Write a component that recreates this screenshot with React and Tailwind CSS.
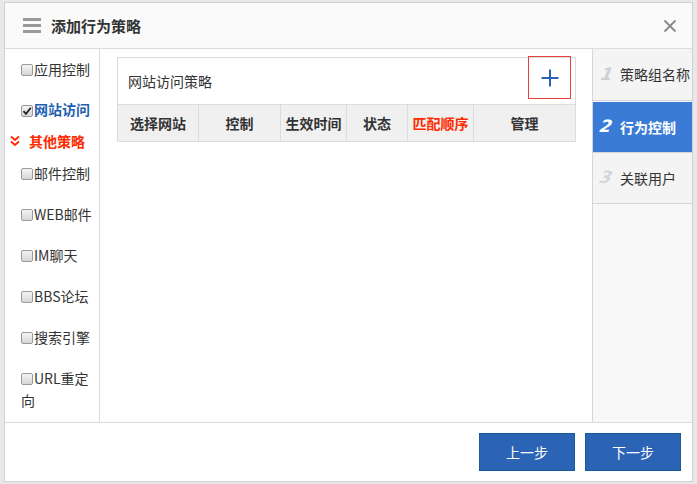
import React from "react";

const FONT = { fontFamily: '"Noto Sans CJK SC", "Noto Sans", sans-serif' };
const NUM = { fontFamily: '"DejaVu Sans", sans-serif' };

function Box({ checked }) {
  return (
    <span className="inline-flex w-[12px] h-[12px] rounded-[2px] border border-[#9a9a9a] bg-gradient-to-b from-[#f4f4f4] to-[#d6d6d6] items-center justify-center align-[-1px] mr-[1px] shrink-0">
      {checked && (
        <svg width="10" height="10" viewBox="0 0 10 10">
          <path d="M1.5 5.2 L4 7.8 L8.8 1.8" fill="none" stroke="#222" strokeWidth="1.8" />
        </svg>
      )}
    </span>
  );
}

function Item({ label, mt, checked, active }) {
  return (
    <div className={`${mt} leading-[22px] text-[14px] pr-[4px] ${active ? "text-[#1f5fb0] font-bold" : "text-[#333]"}`}>
      <Box checked={checked} />
      {label}
    </div>
  );
}

export default function App() {
  const cols = [
    { t: "选择网站", w: "w-[81px]" },
    { t: "控制", w: "w-[82px]" },
    { t: "生效时间", w: "w-[66px]" },
    { t: "状态", w: "w-[61px]" },
    { t: "匹配顺序", w: "w-[66px]", red: true },
    { t: "管理", w: "w-[101px]", last: true },
  ];
  return (
    <div className="w-[697px] h-[484px] bg-[#e8e8e8] pt-[2px] pl-[4px] overflow-hidden" style={FONT}>
      <div className="w-[689px] h-[480px] border border-[#d2d2d2] bg-white flex flex-col">
        {/* header */}
        <div className="h-[46px] border-b border-[#dcdcdc] bg-[#fafafa] flex items-center pl-[18px] pr-[14px] shrink-0">
          <div className="flex flex-col gap-[3px] w-[18px]">
            <span className="h-[3px] bg-[#999]" />
            <span className="h-[3px] bg-[#999]" />
            <span className="h-[3px] bg-[#999]" />
          </div>
          <div className="ml-[10px] text-[15px] font-bold text-[#333] leading-none">添加行为策略</div>
          <div className="ml-auto mr-[1px]">
            <svg width="14" height="14" viewBox="0 0 14 14">
              <path d="M1.5 1.5 L12.5 12.5 M12.5 1.5 L1.5 12.5" stroke="#888" strokeWidth="1.8" />
            </svg>
          </div>
        </div>
        {/* body */}
        <div className="flex h-[373px] shrink-0">
          <div className="w-[95px] border-r border-[#dcdcdc] pl-[16px] pt-[9px] shrink-0">
            <Item label="应用控制" mt="mt-0" />
            <Item label="网站访问" mt="mt-[18px]" checked active />
            <div className="mt-[10px] -ml-[11px] leading-[22px] text-[14px] font-bold text-[#ff2a00] flex items-center">
              <svg width="10" height="12" viewBox="0 0 10 12" className="mr-[9px]">
                <path d="M1 1.5 L5 5 L9 1.5 M1 6.5 L5 10 L9 6.5" fill="none" stroke="#ff2a00" strokeWidth="2" />
              </svg>
              其他策略
            </div>
            <Item label="邮件控制" mt="mt-[10px]" />
            <Item label="WEB邮件" mt="mt-[19px]" />
            <Item label="IM聊天" mt="mt-[19px]" />
            <Item label="BBS论坛" mt="mt-[19px]" />
            <Item label="搜索引擎" mt="mt-[19px]" />
            <Item label="URL重定向" mt="mt-[19px]" />
          </div>
          <div className="w-[492px] pl-[17px] pt-[8px] shrink-0">
            <div className="w-[459px] border border-[#dcdcdc] relative">
              <div className="h-[47px] border-b border-[#dcdcdc] flex items-center pl-[10px] text-[14px] text-[#333]">
                网站访问策略
              </div>
              <div className="absolute right-[4px] top-[-2px] w-[43px] h-[43px] border border-[#e8403a] flex items-center justify-center">
                <svg width="18" height="18" viewBox="0 0 18 18">
                  <path d="M9 0.5 V17.5 M0.5 9 H17.5" stroke="#2a62b5" strokeWidth="2" />
                </svg>
              </div>
              <div className="flex h-[36px] bg-[#f0f0f0]">
                {cols.map((c) => (
                  <div
                    key={c.t}
                    className={`${c.w} ${c.last ? "" : "border-r border-[#dcdcdc]"} flex items-center justify-center text-[14px] font-bold ${c.red ? "text-[#ff2a00]" : "text-[#333]"}`}
                  >
                    {c.t}
                  </div>
                ))}
              </div>
            </div>
          </div>
          <div className="w-[100px] border-l border-[#d6d6d6] bg-[#f8f8f8] shrink-0">
            <div className="h-[52px] border-b border-[#d6d6d6] bg-[#f4f4f4] flex items-center pl-[8px]">
              <span className="w-[19px] text-[17px] font-bold italic text-[#d0d0d0] -skew-x-12 inline-block" style={NUM}>1</span>
              <span className="text-[14px] text-[#333]">策略组名称</span>
            </div>
            <div className="h-[50px] mt-[1px] bg-[#3a7bd5] flex items-center pl-[7px]">
              <span className="w-[20px] text-[17px] font-bold italic text-white -skew-x-12 inline-block" style={NUM}>2</span>
              <span className="text-[14px] font-bold text-white">行为控制</span>
            </div>
            <div className="h-[52px] border-y border-[#d6d6d6] bg-[#f4f4f4] flex items-center pl-[7px]">
              <span className="w-[20px] text-[17px] font-bold italic text-[#d6d6d6] -skew-x-12 inline-block" style={NUM}>3</span>
              <span className="text-[14px] text-[#333]">关联用户</span>
            </div>
          </div>
        </div>
        {/* footer */}
        <div className="flex-1 border-t border-[#dcdcdc] flex items-start justify-end pt-[10px] pr-[11px] gap-[10px]">
          <button className="w-[96px] h-[38px] bg-[#2b64b4] border border-[#1b5c98] text-white text-[14px]">上一步</button>
          <button className="w-[96px] h-[38px] bg-[#2b64b4] border border-[#1b5c98] text-white text-[14px]">下一步</button>
        </div>
      </div>
    </div>
  );
}
